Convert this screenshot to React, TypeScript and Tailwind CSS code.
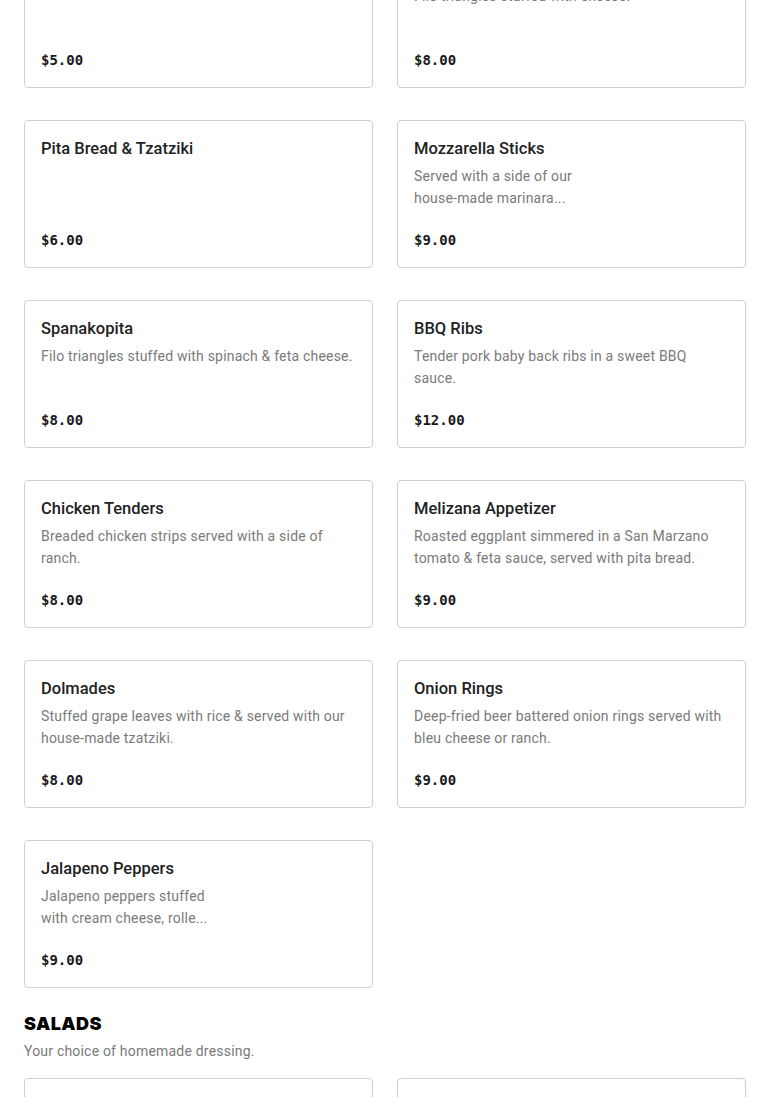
const appetizers = [
  { name: "Feta Cheese", desc: "", price: "$5.00" },
  { name: "Tiropita", desc: "Filo triangles stuffed with cheese.", price: "$8.00" },
  { name: "Pita Bread & Tzatziki", desc: "", price: "$6.00" },
  {
    name: "Mozzarella Sticks",
    desc: "Served with a side of our house-made marinara...",
    price: "$9.00",
    narrow: true,
  },
  { name: "Spanakopita", desc: "Filo triangles stuffed with spinach & feta cheese.", price: "$8.00" },
  { name: "BBQ Ribs", desc: "Tender pork baby back ribs in a sweet BBQ sauce.", price: "$12.00" },
  { name: "Chicken Tenders", desc: "Breaded chicken strips served with a side of ranch.", price: "$8.00" },
  {
    name: "Melizana Appetizer",
    desc: "Roasted eggplant simmered in a San Marzano tomato & feta sauce, served with pita bread.",
    price: "$9.00",
  },
  { name: "Dolmades", desc: "Stuffed grape leaves with rice & served with our house-made tzatziki.", price: "$8.00" },
  { name: "Onion Rings", desc: "Deep-fried beer battered onion rings served with bleu cheese or ranch.", price: "$9.00" },
  {
    name: "Jalapeno Peppers",
    desc: "Jalapeno peppers stuffed with cream cheese, rolle...",
    price: "$9.00",
    narrow: true,
  },
];

type Item = { name: string; desc: string; price: string; narrow?: boolean };

function MenuCard({ item }: { item: Item }) {
  return (
    <div className="flex h-[148px] flex-col rounded border border-[#cfcfcf] bg-white px-4 pt-4 pb-[17px]">
      <h3 className="text-[16.5px] font-medium leading-6 text-[#222]">{item.name}</h3>
      {item.desc && (
        <p
          className={`mt-1 line-clamp-2 text-[14px] leading-[22px] tracking-[0.2px] text-[#7a7a7a] ${item.narrow ? "max-w-[175px]" : ""}`}
        >
          {item.desc}
        </p>
      )}
      <p
        className="mt-auto text-[14px] font-bold leading-5 text-[#1a1a1a]"
        style={{ fontFamily: '"DejaVu Sans Mono", "Liberation Mono", monospace' }}
      >
        {item.price}
      </p>
    </div>
  );
}

export default function App() {
  return (
    <div
      className="min-h-screen overflow-hidden bg-white px-6"
      style={{ fontFamily: 'Roboto, "Noto Sans", sans-serif' }}
    >
      <div className="-mt-[60px] grid grid-cols-2 gap-x-6 gap-y-8">
        {appetizers.map((item) => (
          <MenuCard key={item.name} item={item} />
        ))}
      </div>

      <section className="mt-6">
        <h2
          className="text-[18px] font-black leading-6 tracking-wide text-black"
          style={{ fontFamily: 'Inter, "Noto Sans", sans-serif' }}
        >
          SALADS
        </h2>
        <p className="mt-1 text-[14px] leading-[22px] tracking-[0.2px] text-[#7a7a7a]">
          Your choice of homemade dressing.
        </p>
        <div className="mt-4 grid grid-cols-2 gap-x-6 gap-y-8">
          <div className="h-[148px] rounded border border-[#cfcfcf]" />
          <div className="h-[148px] rounded border border-[#cfcfcf]" />
        </div>
      </section>
    </div>
  );
}
